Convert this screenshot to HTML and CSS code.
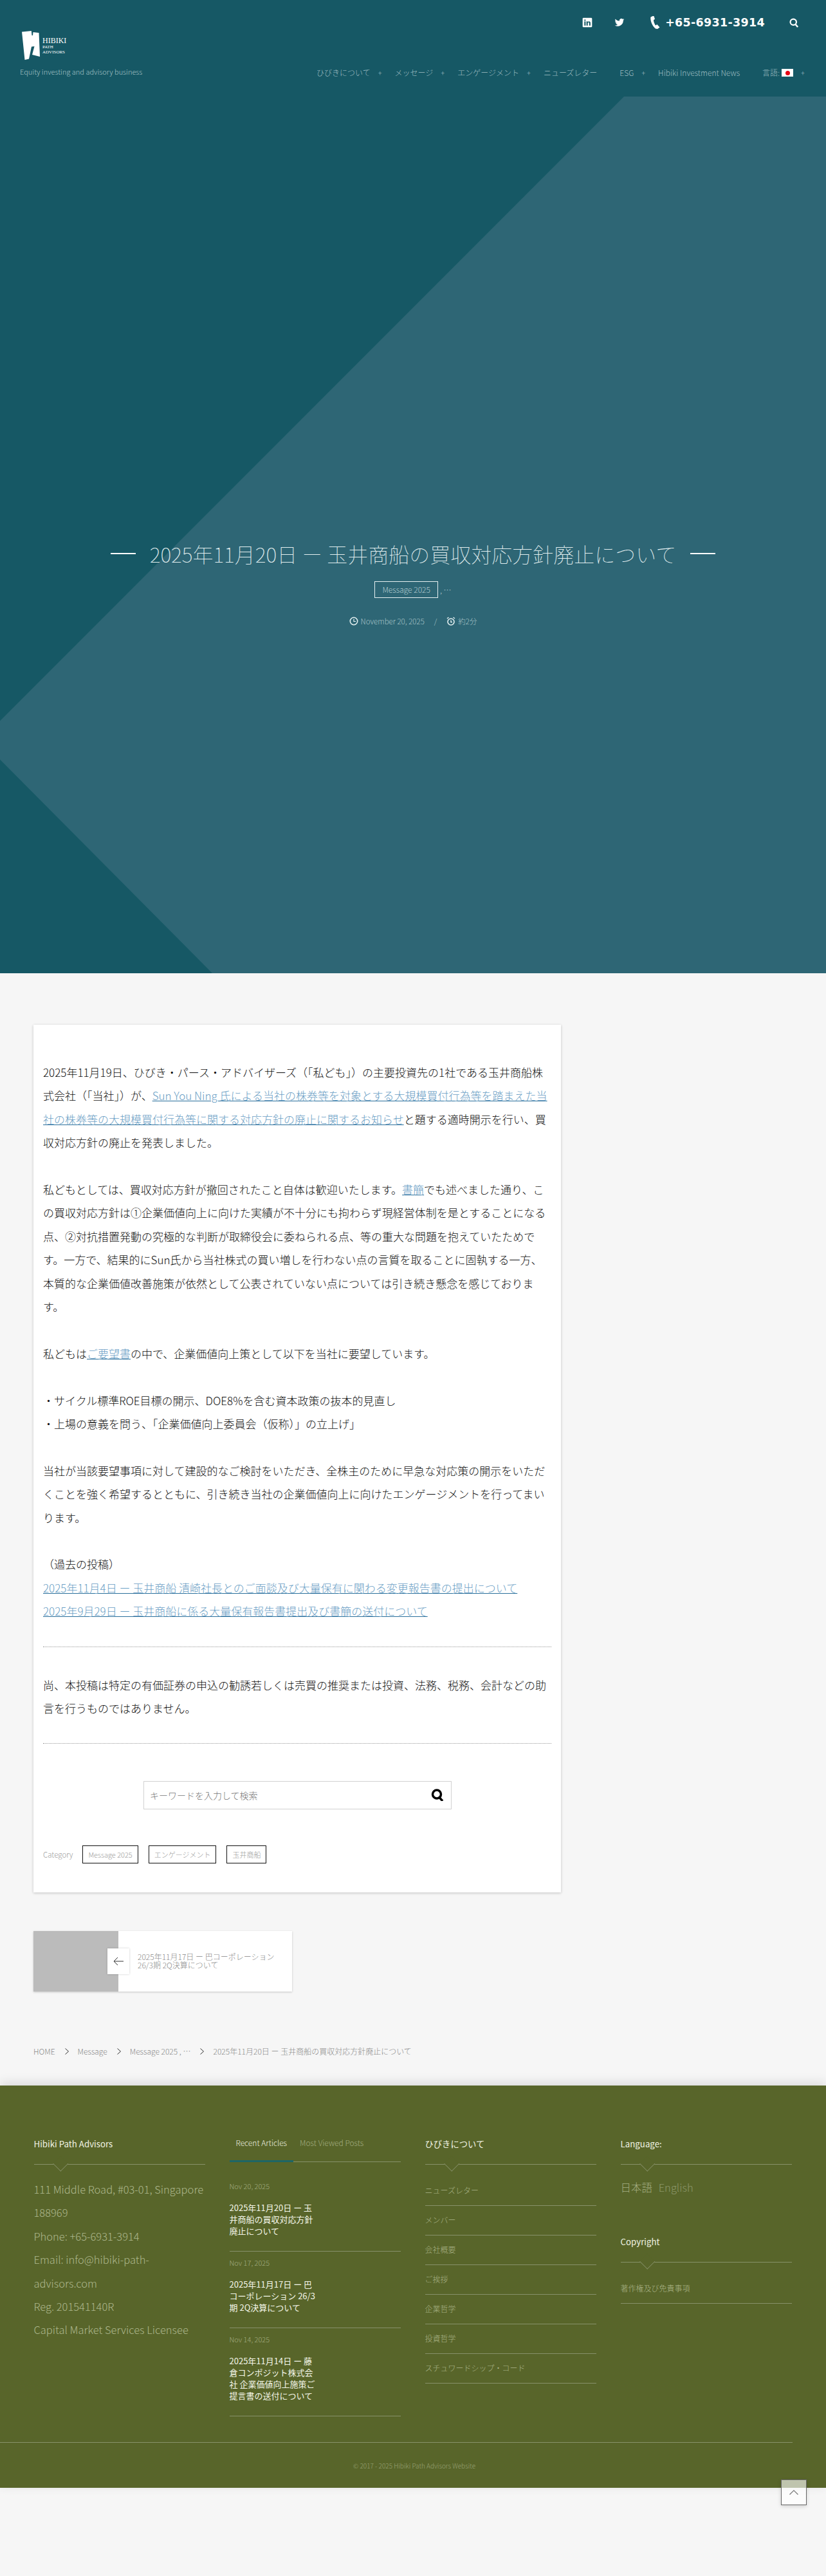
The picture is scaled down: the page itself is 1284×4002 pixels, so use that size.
FILE: index.html
```html
<!DOCTYPE html>
<html lang="ja">
<head>
    <meta charset="UTF-8">
    <title>2025年11月20日 ー 玉井商船の買収対応方針廃止について</title>
    <link rel="stylesheet" href="styles.css">
</head>
<body>

<header class="hero">
    <svg class="hero-shape" viewBox="0 0 1284 1512" aria-hidden="true">
        <polygon points="970,150 1284,150 1284,1512 330,1512 0,1180 0,1120"></polygon>
    </svg>

    <div class="site-head">
        <div class="logo-block">
            <div class="logo">
                <svg class="logo-mark" viewBox="0 0 28 45"><path fill="#fff" d="M0 1.500 14.800 0 15.500 7 17 7 17.500 2 26.500 3 28 40 16 37 19.500 24 15 24.500 11 43.500 4.500 45z"/></svg>
                <div class="logo-text">
                    <span class="logo-big">HIBIKI</span>
                    <span>PATH</span>
                    <span>ADVISORS</span>
                </div>
            </div>
            <p class="tagline">Equity investing and advisory business</p>
        </div>

        <div class="head-right">
            <div class="top-bar">
                <svg class="top-icon" viewBox="0 0 24 24"><path fill="#fff" fill-rule="evenodd" d="M3 1h18a2 2 0 0 1 2 2v18a2 2 0 0 1-2 2H3a2 2 0 0 1-2-2V3a2 2 0 0 1 2-2zM5 9.500V19h3V9.500zM6.500 5A1.700 1.700 0 1 0 6.500 8.400 1.700 1.700 0 0 0 6.500 5zM10 9.500V19h3v-5c0-3 3.300-3 3.300 0v5h3v-6c0-4.500-4.700-4.500-6.300-2.200V9.500z"/></svg>
                <svg class="top-icon twitter" viewBox="0 0 24 24"><path fill="#fff" d="M23 4.900c-.8.400-1.700.6-2.600.700.900-.6 1.600-1.400 2-2.500-.9.500-1.900.9-2.900 1.100A4.500 4.500 0 0 0 11.800 8.300C8 8.100 4.700 6.300 2.500 3.600c-1.200 2-.6 4.700 1.400 6-.7 0-1.400-.2-2-.6 0 2.200 1.500 4.100 3.600 4.500-.7.200-1.400.2-2 .1.600 1.800 2.300 3.100 4.200 3.100A9.100 9.100 0 0 1 1 18.600 12.800 12.800 0 0 0 20.700 7.200c.9-.6 1.700-1.400 2.300-2.300z"/></svg>
                <span class="phone">
                    <svg class="phone-icon" viewBox="0 0 15 20"><path fill="#fff" d="M3.500 0 .5 1.500C-.5 6 2.500 15 8 19.500L11 20l3.500-2.500-4-4.500L8 14.500C6 11.500 5 8.500 5 6l2-1.200L5.500 0z"/></svg>
                    <span>+65-6931-3914</span>
                </span>
                <svg class="top-icon search" viewBox="0 0 24 24"><circle cx="10" cy="10" r="7.500" fill="none" stroke="#fff" stroke-width="3.500"/><path d="M15.500 16 21 22.500" stroke="#fff" stroke-width="4" fill="none"/></svg>
            </div>

            <nav class="main-nav">
                <a>ひびきについて</a><i>+</i>
                <a>メッセージ</a><i>+</i>
                <a>エンゲージメント</a><i>+</i>
                <a class="no-plus">ニューズレター</a>
                <a>ESG</a><i>+</i>
                <a class="no-plus">Hibiki Investment News</a>
                <a class="lang">言語: <span class="flag"><b></b></span></a><i>+</i>
            </nav>
        </div>
    </div>

    <div class="hero-title">
        <h1>2025年11月20日 ー 玉井商船の買収対応方針廃止について</h1>
        <div class="hero-tags"><span class="hero-tag">Message 2025</span><span>, …</span></div>
        <div class="hero-meta">
            <svg class="meta-icon" viewBox="0 0 14 14"><circle cx="7" cy="7" r="5.700" fill="none" stroke="#e4f0f1" stroke-width="1.600"/><path d="M7 3.500V7.500H10" fill="none" stroke="#e4f0f1" stroke-width="1.200"/></svg>
            <span>November 20, 2025</span>
            <span class="meta-sep">/</span>
            <svg class="meta-icon" viewBox="0 0 14 14"><circle cx="7" cy="8" r="5" fill="none" stroke="#e4f0f1" stroke-width="1.600"/><path d="M7 5.500V8.500H9M1 3l2.500-2M13 3l-2.500-2" fill="none" stroke="#e4f0f1" stroke-width="1.400"/></svg>
            <span>約2分</span>
        </div>
    </div>
</header>

<main class="page">
    <article class="post-card">
        <p>2025年11月19日、ひびき・パース・アドバイザーズ（「私ども」）の主要投資先の1社である玉井商船株式会社（「当社」）が、<a>Sun You Ning 氏による当社の株券等を対象とする大規模買付行為等を踏まえた当社の株券等の大規模買付行為等に関する対応方針の廃止に関するお知らせ</a>と題する適時開示を行い、買収対応方針の廃止を発表しました。</p>

        <p>私どもとしては、買収対応方針が撤回されたこと自体は歓迎いたします。<a>書簡</a>でも述べました通り、この買収対応方針は①企業価値向上に向けた実績が不十分にも拘わらず現経営体制を是とすることになる点、②対抗措置発動の究極的な判断が取締役会に委ねられる点、等の重大な問題を抱えていたためです。一方で、結果的にSun氏から当社株式の買い増しを行わない点の言質を取ることに固執する一方、本質的な企業価値改善施策が依然として公表されていない点については引き続き懸念を感じております。</p>

        <p>私どもは<a>ご要望書</a>の中で、企業価値向上策として以下を当社に要望しています。</p>

        <p>・サイクル標準ROE目標の開示、DOE8%を含む資本政策の抜本的見直し<br>・上場の意義を問う、「企業価値向上委員会（仮称）」の立上げ」</p>

        <p>当社が当該要望事項に対して建設的なご検討をいただき、全株主のために早急な対応策の開示をいただくことを強く希望するとともに、引き続き当社の企業価値向上に向けたエンゲージメントを行ってまいります。</p>

        <p>（過去の投稿）<br><a>2025年11月4日 ー 玉井商船 清崎社長とのご面談及び大量保有に関わる変更報告書の提出について</a><br><a>2025年9月29日 ー 玉井商船に係る大量保有報告書提出及び書簡の送付について</a></p>

        <hr class="dotted">
        <p class="notice">尚、本投稿は特定の有価証券の申込の勧誘若しくは売買の推奨または投資、法務、税務、会計などの助言を行うものではありません。</p>
        <hr class="dotted">

        <div class="search-box">
            <span>キーワードを入力して検索</span>
            <svg class="search-icon" viewBox="0 0 20 19"><circle cx="9" cy="8.500" r="6.500" fill="none" stroke="#000" stroke-width="3.500"/><path d="M13 13.500 18 19" stroke="#000" stroke-width="3.500" fill="none"/></svg>
        </div>

        <div class="post-cats">
            <span class="cat-label">Category</span>
            <span class="cat-tag">Message 2025</span>
            <span class="cat-tag">エンゲージメント</span>
            <span class="cat-tag">玉井商船</span>
        </div>
    </article>

    <div class="prev-card">
        <div class="prev-thumb"></div>
        <div class="prev-arrow">
            <svg viewBox="0 0 16 14"><path d="M16 7H1M7 1 1 7l6 6" fill="none" stroke="#333" stroke-width="1"/></svg>
        </div>
        <div class="prev-text">2025年11月17日 ー 巴コーポレーション 26/3期 2Q決算について</div>
    </div>

    <div class="crumbs">
        <span>HOME</span><svg viewBox="0 0 6 10"><path d="M.5.500 5.500 5l-5 4.500" fill="none" stroke="#333"/></svg>
        <span>Message</span><svg viewBox="0 0 6 10"><path d="M.5.500 5.500 5l-5 4.500" fill="none" stroke="#333"/></svg>
        <span>Message 2025 , …</span><svg viewBox="0 0 6 10"><path d="M.5.500 5.500 5l-5 4.500" fill="none" stroke="#333"/></svg>
        <span>2025年11月20日 ー 玉井商船の買収対応方針廃止について</span>
    </div>
</main>

<footer class="site-footer">
    <div class="footer-cols">
        <section class="footer-col">
            <h3 class="footer-head">Hibiki Path Advisors</h3>
            <p class="address">111 Middle Road, #03-01, Singapore 188969<br>Phone: +65-6931-3914<br>Email: info@hibiki-path-advisors.com<br>Reg. 201541140R<br>Capital Market Services Licensee</p>
        </section>

        <section class="footer-col">
            <div class="tabs"><span class="tab active">Recent Articles</span><span class="tab">Most Viewed Posts</span></div>
            <div class="post-list">
                <div class="post-item">
                    <div class="post-date">Nov 20, 2025</div>
                    <div class="post-link">2025年11月20日 ー 玉井商船の買収対応方針廃止について</div>
                </div>
                <div class="post-item">
                    <div class="post-date">Nov 17, 2025</div>
                    <div class="post-link">2025年11月17日 ー 巴コーポレーション 26/3期 2Q決算について</div>
                </div>
                <div class="post-item">
                    <div class="post-date">Nov 14, 2025</div>
                    <div class="post-link">2025年11月14日 ー 藤倉コンポジット株式会社 企業価値向上施策ご提言書の送付について</div>
                </div>
            </div>
        </section>

        <section class="footer-col">
            <h3 class="footer-head">ひびきについて</h3>
            <ul class="footer-list">
                <li>ニューズレター</li>
                <li>メンバー</li>
                <li>会社概要</li>
                <li>ご挨拶</li>
                <li>企業哲学</li>
                <li>投資哲学</li>
                <li>スチュワードシップ・コード</li>
            </ul>
        </section>

        <section class="footer-col">
            <h3 class="footer-head">Language:</h3>
            <p class="lang-links"><span>日本語</span> <span class="dim">English</span></p>
            <h3 class="footer-head copy-head">Copyright</h3>
            <ul class="footer-list">
                <li>著作権及び免責事項</li>
            </ul>
        </section>
    </div>
    <div class="footer-bottom">© 2017 - 2025 Hibiki Path Advisors Website</div>
</footer>

<a class="to-top"><svg viewBox="0 0 14 8"><path d="M.5 7.500 7 1l6.500 6.500" fill="none" stroke="#777" stroke-width="1.200"/></svg></a>

</body>
</html>
```

FILE: styles.css
```css
* {
    box-sizing: border-box;
}

html, body {
    margin: 0;
    padding: 0;
}

body {
    position: relative;
    min-height: 4002px;
    background: #f6f6f6;
    color: #222;
    font-family: "Noto Sans CJK JP", "Noto Sans", sans-serif;
    font-weight: 300;
}

/* hero */
.hero {
    position: relative;
    height: 1512px;
    background: #165865;
    color: #fff;
    overflow: hidden;
}

.hero-shape {
    position: absolute;
    left: 0;
    top: 0;
    width: 1284px;
    height: 1512px;
}

.hero-shape polygon {
    fill: #2e6675;
}

.site-head {
    position: relative;
    display: flex;
    justify-content: space-between;
    padding: 0 33px 0 31px;
}

.logo-block {
    padding-top: 48px;
}

.logo {
    display: flex;
    align-items: flex-start;
    margin-left: 3px;
}

.logo-mark {
    width: 28px;
    height: 45px;
}

.logo-text {
    display: flex;
    flex-direction: column;
    margin: 10px 0 0 4px;
    font-family: "Liberation Serif", serif;
    font-weight: 400;
    font-size: 7px;
    line-height: 8px;
}

.logo-big {
    font-size: 12px;
    line-height: 11px;
}

.tagline {
    margin: 9px 0 0;
    font-size: 11px;
    line-height: 18px;
    color: #a7c4c8;
    white-space: nowrap;
}

.head-right {
    display: flex;
    flex-direction: column;
    align-items: flex-end;
}

.top-bar {
    display: flex;
    align-items: center;
    height: 26px;
    margin-top: 22px;
    padding-right: 9px;
}

.top-icon {
    width: 16px;
    height: 16px;
}

.top-icon.twitter {
    margin-left: 34px;
}

.phone {
    display: flex;
    align-items: center;
    margin-left: 40px;
    font-family: "DejaVu Sans", sans-serif;
    font-weight: 700;
    font-size: 17.500px;
    letter-spacing: .3px;
}

.phone-icon {
    width: 15px;
    height: 20px;
    margin-right: 8px;
}

.top-icon.search {
    width: 15px;
    height: 15px;
    margin-left: 38px;
}

.main-nav {
    display: flex;
    align-items: center;
    margin-top: 55px;
    font-size: 12px;
    line-height: 20px;
    color: #9fbdc2;
    white-space: nowrap;
}

.main-nav i {
    font-style: normal;
    font-size: 11px;
    margin: 0 20px 0 12px;
}

.main-nav .no-plus {
    margin-right: 35px;
}

.main-nav i:last-child {
    margin-right: 0;
}

.lang {
    display: flex;
    align-items: center;
}

.flag {
    display: inline-flex;
    align-items: center;
    justify-content: center;
    width: 18px;
    height: 12px;
    margin-left: 3px;
    background: #fff;
}

.flag b {
    width: 7px;
    height: 7px;
    border-radius: 50%;
    background: #e60012;
}

.hero-title {
    position: relative;
    margin-top: 709px;
    text-align: center;
}

.hero-title h1 {
    display: flex;
    justify-content: center;
    align-items: center;
    margin: 0;
    font-weight: 100;
    font-size: 32px;
    line-height: 56px;
    color: #e4f0f1;
    white-space: nowrap;
}

.hero-title h1::before,
.hero-title h1::after {
    content: "";
    width: 39px;
    height: 2px;
    background: #fff;
    margin: 0 22px;
}

.hero-tags {
    display: flex;
    justify-content: center;
    align-items: center;
    margin-top: 15px;
    font-size: 12px;
    color: #b5ced2;
}

.hero-tag {
    border: 1px solid #e6f0f1;
    padding: 0 11px;
    line-height: 24px;
    margin-right: 3px;
}

.hero-meta {
    display: flex;
    justify-content: center;
    align-items: center;
    margin-top: 26px;
    font-size: 11.500px;
    line-height: 20px;
    color: #a9c5c9;
}

.meta-icon {
    width: 14px;
    height: 14px;
    margin-right: 4px;
}

.meta-sep {
    margin: 0 15px;
}

/* article */
.page {
    padding: 80px 52px 43px;
}

.post-card {
    width: 820px;
    padding: 56px 15px 45px;
    background: #fff;
    box-shadow: 0 1px 4px rgba(0, 0, 0, .22);
    font-size: 17px;
    line-height: 36.400px;
    color: #111;
}

.post-card p {
    margin: 0 0 36.400px;
}

.post-card a {
    color: #6ba0c5;
    text-decoration: underline;
    text-decoration-color: #2a6f9b;
}

.dotted {
    border: 0;
    border-top: 1px dotted #999;
    margin: 0;
}

.post-card p.notice {
    margin: 41px 0 35px;
}

.search-box {
    display: flex;
    justify-content: space-between;
    align-items: center;
    width: 479px;
    height: 44px;
    margin: 58px 0 0 156px;
    padding: 0 11px 0 9px;
    border: 1px solid #d2d2d2;
    font-size: 14px;
    line-height: 20px;
    color: #777;
}

.search-icon {
    width: 20px;
    height: 19px;
}

.post-cats {
    display: flex;
    align-items: center;
    margin-top: 56px;
    font-size: 11.500px;
    line-height: 20px;
    color: #999;
}

.cat-label {
    margin-right: 15px;
}

.cat-tag {
    border: 1px solid #111;
    padding: 0 8px;
    font-size: 11px;
    line-height: 26px;
    margin-right: 16px;
}

.prev-card {
    position: relative;
    display: flex;
    width: 402px;
    height: 94px;
    margin-top: 60px;
    background: #fff;
    box-shadow: 0 1px 3px rgba(0, 0, 0, .2);
}

.prev-thumb {
    width: 132px;
    background: #bbb;
}

.prev-arrow {
    position: absolute;
    left: 115px;
    top: 27px;
    display: flex;
    align-items: center;
    justify-content: center;
    width: 34px;
    height: 40px;
    background: #fff;
    box-shadow: 0 0 3px rgba(0, 0, 0, .2);
}

.prev-arrow svg {
    width: 16px;
    height: 14px;
}

.prev-text {
    width: 225px;
    margin: 33px 0 0 30px;
    font-size: 12px;
    line-height: 13px;
    color: #888;
}

.crumbs {
    display: flex;
    align-items: center;
    margin-top: 83px;
    font-size: 12px;
    line-height: 20px;
    color: #888;
    white-space: nowrap;
}

.crumbs svg {
    width: 6px;
    height: 10px;
    margin: 0 14px 0 15px;
}

/* footer */
.site-footer {
    height: 625px;
    background: #58652a;
    box-shadow: 0 -4px 16px rgba(0, 0, 0, .12);
    color: #b7c19a;
}

.footer-cols {
    display: flex;
    gap: 38px;
    height: 554px;
    padding: 78px 0 0 52.500px;
}

.footer-col {
    width: 266px;
}

.footer-head {
    position: relative;
    margin: 0;
    height: 45px;
    border-bottom: 1px solid #87916a;
    font-weight: 400;
    font-size: 13.300px;
    line-height: 26px;
    color: #f0f3e4;
}

.footer-head::after {
    content: "";
    position: absolute;
    left: 33px;
    bottom: -8px;
    width: 15.500px;
    height: 15.500px;
    background: #58652a;
    border-right: 1px solid #87916a;
    border-bottom: 1px solid #87916a;
    transform: rotate(45deg);
}

.address {
    margin: 20px 0 0;
    font-size: 16.500px;
    line-height: 36.400px;
    color: #aeb88e;
}

.tabs {
    display: flex;
    height: 41px;
    border-bottom: 1px solid #87916a;
    font-size: 12px;
    line-height: 22px;
}

.tab {
    padding: 0 10px;
    height: 41px;
    color: #a4ae82;
}

.tab.active {
    color: #eef1e0;
    border-bottom: 3px solid #1e6666;
}

.post-list {
    padding-top: 20px;
}

.post-item {
    padding: 7px 0 22px;
    border-bottom: 1px solid #87916a;
}

.post-date {
    font-size: 11px;
    line-height: 20px;
    color: #a4ae82;
}

.post-link {
    width: 135px;
    margin-top: 15px;
    font-size: 13px;
    line-height: 18px;
    color: #f3f5e8;
    font-weight: 400;
}

.footer-list {
    list-style: none;
    margin: 18px 0 0;
    padding: 0;
}

.footer-list li {
    display: flex;
    align-items: center;
    height: 46px;
    border-bottom: 1px solid #87916a;
    font-size: 12px;
    line-height: 20px;
    color: #a9b388;
}

.lang-links {
    margin: 20px 0 0;
    font-size: 16.500px;
    line-height: 30px;
    color: #a4ae82;
}

.lang-links .dim {
    margin-left: 6px;
    color: #8c976a;
}

.copy-head {
    margin-top: 57px;
}

.footer-bottom {
    width: 1232px;
    border-top: 1px solid #87916a;
    padding: 26px 0 0 0;
    font-size: 10px;
    line-height: 20px;
    color: #98a376;
    text-indent: 549px;
}

.to-top {
    position: absolute;
    left: 1214px;
    top: 3852px;
    display: flex;
    align-items: center;
    justify-content: center;
    width: 40px;
    height: 40px;
    border: 1px solid #666;
    background: rgba(255, 255, 255, .62);
    box-shadow: 0 2px 6px rgba(0, 0, 0, .15);
}

.to-top svg {
    width: 14px;
    height: 8px;
}
```
